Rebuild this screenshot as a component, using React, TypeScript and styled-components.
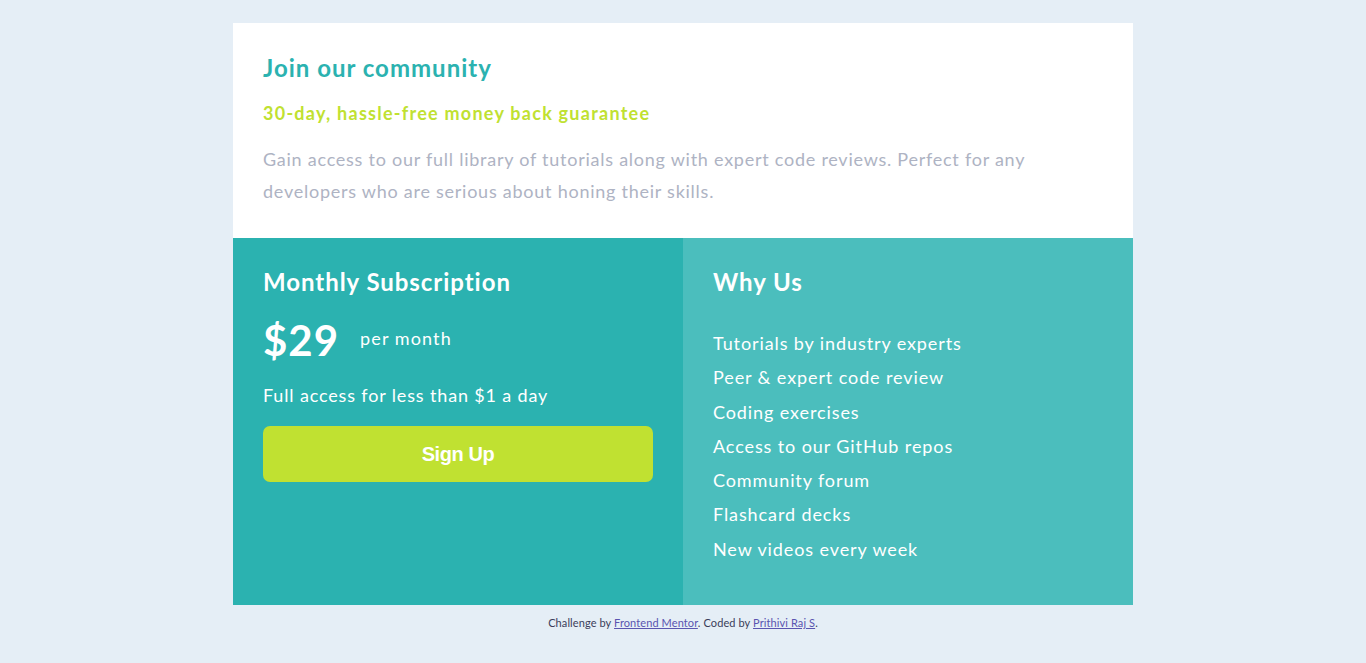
import styled, { createGlobalStyle } from 'styled-components'

const colors = {
  page: '#e5eef6',
  cyan: '#2bb2b0',
  cyanLight: '#4bbebd',
  lime: '#c0e131',
  gray: '#aeb3c3',
  white: '#ffffff',
}

const GlobalStyle = createGlobalStyle`
  html, body {
    margin: 0;
    padding: 0;
    background: ${colors.page};
    font-family: 'Lato', 'Noto Sans', sans-serif;
  }
  * {
    box-sizing: border-box;
  }
`

const Page = styled.main`
  width: 100%;
  min-height: 663px;
  display: flex;
  flex-direction: column;
  align-items: center;
  padding-top: 23px;
`

const Card = styled.section`
  width: 900px;
  display: flex;
  flex-direction: column;
`

const Top = styled.div`
  background: ${colors.white};
  padding: 30px 30px 31px;
`

const Title = styled.h1`
  margin: 0;
  color: ${colors.cyan};
  font-size: 24px;
  font-weight: 700;
  letter-spacing: 1px;
  line-height: 30px;
`

const Guarantee = styled.h2`
  margin: 19px 0 0;
  color: ${colors.lime};
  font-size: 18px;
  font-weight: 700;
  letter-spacing: 1.25px;
  line-height: 22px;
`

const Intro = styled.p`
  margin: 19px 0 0;
  color: ${colors.gray};
  font-size: 18px;
  line-height: 32px;
  letter-spacing: 0.75px;
  max-width: 800px;
`

const Bottom = styled.div`
  display: grid;
  grid-template-columns: 1fr 1fr;
  height: 367px;
`

const Panel = styled.div<{ light?: boolean }>`
  background: ${(p) => (p.light ? colors.cyanLight : colors.cyan)};
  color: ${colors.white};
  padding: 29px 30px;
  display: flex;
  flex-direction: column;
`

const PanelTitle = styled.h3`
  margin: 0;
  font-size: 24px;
  font-weight: 700;
  letter-spacing: 0.95px;
  line-height: 30px;
`

const PriceRow = styled.div`
  display: flex;
  align-items: center;
  gap: 21px;
  margin-top: 20px;
`

const Price = styled.span`
  font-size: 42px;
  font-weight: 700;
  line-height: 46px;
  letter-spacing: 1px;
`

const Per = styled.span`
  font-size: 18px;
  letter-spacing: 1.1px;
  margin-top: -4px;
`

const Access = styled.p`
  margin: 20px 0 0;
  font-size: 18px;
  line-height: 24px;
  letter-spacing: 0.85px;
`

const SignUp = styled.button`
  margin-top: 19px;
  height: 56px;
  width: 100%;
  border: none;
  border-radius: 7px;
  background: ${colors.lime};
  color: ${colors.white};
  font-family: 'Liberation Sans', Arial, sans-serif;
  font-size: 20px;
  font-weight: 700;
  letter-spacing: -0.4px;
  cursor: pointer;
`

const List = styled.ul`
  list-style: none;
  margin: 29px 0 0;
  padding: 0;
  display: flex;
  flex-direction: column;
`

const Item = styled.li`
  font-size: 18px;
  line-height: 34.3px;
  letter-spacing: 0.9px;
`

const Footer = styled.footer`
  margin-top: 11px;
  font-size: 11px;
  color: #3b3d5a;
  letter-spacing: 0.1px;
  a {
    color: #5a55b0;
  }
`

const reasons = [
  'Tutorials by industry experts',
  'Peer & expert code review',
  'Coding exercises',
  'Access to our GitHub repos',
  'Community forum',
  'Flashcard decks',
  'New videos every week',
]

export default function App() {
  return (
    <>
      <GlobalStyle />
      <Page>
        <Card>
          <Top>
            <Title>Join our community</Title>
            <Guarantee>30-day, hassle-free money back guarantee</Guarantee>
            <Intro>
              Gain access to our full library of tutorials along with expert code reviews. Perfect for any
              developers who are serious about honing their skills.
            </Intro>
          </Top>
          <Bottom>
            <Panel>
              <PanelTitle>Monthly Subscription</PanelTitle>
              <PriceRow>
                <Price>$29</Price>
                <Per>per month</Per>
              </PriceRow>
              <Access>Full access for less than $1 a day</Access>
              <SignUp>Sign Up</SignUp>
            </Panel>
            <Panel light>
              <PanelTitle>Why Us</PanelTitle>
              <List>
                {reasons.map((r) => (
                  <Item key={r}>{r}</Item>
                ))}
              </List>
            </Panel>
          </Bottom>
        </Card>
        <Footer>
          Challenge by <a href='#'>Frontend Mentor</a>. Coded by <a href='#'>Prithivi Raj S</a>.
        </Footer>
      </Page>
    </>
  )
}
